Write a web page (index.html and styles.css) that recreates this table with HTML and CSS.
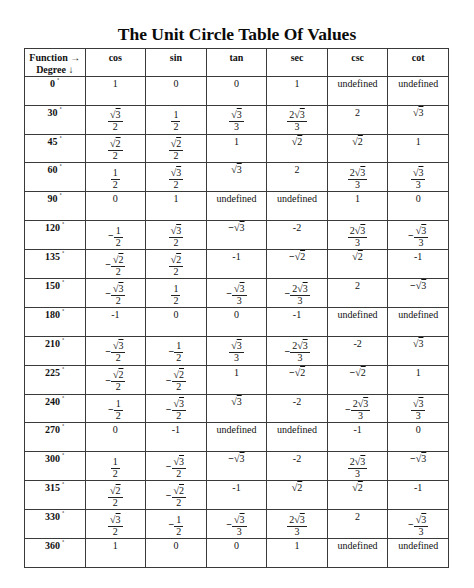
FILE: index.html
```html
<!DOCTYPE html>
<html>
<head>
<meta charset="utf-8">
<link rel="stylesheet" href="styles.css">
</head>
<body>
<h1 class="title">The Unit Circle Table Of Values</h1>
<table class="tbl">
<colgroup><col><col><col><col><col><col><col></colgroup>
<tr class="head"><th>Function →<br>Degree ↓</th><th>cos</th><th>sin</th><th>tan</th><th>sec</th><th>csc</th><th>cot</th></tr>
<tr><th>0<sup>˚</sup></th><td>1</td><td>0</td><td>0</td><td>1</td><td>undefined</td><td>undefined</td></tr>
<tr><th>30<sup>˚</sup></th>
<td><span class="fr"><span class="n"><span class="r">√<span class="o">3</span></span></span><span class="d">2</span></span></td>
<td><span class="fr"><span class="n">1</span><span class="d">2</span></span></td>
<td><span class="fr"><span class="n"><span class="r">√<span class="o">3</span></span></span><span class="d">3</span></span></td>
<td><span class="fr"><span class="n">2<span class="r">√<span class="o">3</span></span></span><span class="d">3</span></span></td>
<td>2</td>
<td><span class="r">√<span class="o">3</span></span></td></tr>
<tr><th>45<sup>˚</sup></th>
<td><span class="fr"><span class="n"><span class="r">√<span class="o">2</span></span></span><span class="d">2</span></span></td>
<td><span class="fr"><span class="n"><span class="r">√<span class="o">2</span></span></span><span class="d">2</span></span></td>
<td>1</td>
<td><span class="r">√<span class="o">2</span></span></td>
<td><span class="r">√<span class="o">2</span></span></td>
<td>1</td></tr>
<tr><th>60<sup>˚</sup></th>
<td><span class="fr"><span class="n">1</span><span class="d">2</span></span></td>
<td><span class="fr"><span class="n"><span class="r">√<span class="o">3</span></span></span><span class="d">2</span></span></td>
<td><span class="r">√<span class="o">3</span></span></td>
<td>2</td>
<td><span class="fr"><span class="n">2<span class="r">√<span class="o">3</span></span></span><span class="d">3</span></span></td>
<td><span class="fr"><span class="n"><span class="r">√<span class="o">3</span></span></span><span class="d">3</span></span></td></tr>
<tr><th>90<sup>˚</sup></th><td>0</td><td>1</td><td>undefined</td><td>undefined</td><td>1</td><td>0</td></tr>
<tr><th>120<sup>˚</sup></th>
<td><span class="neg"><span class="m">−</span><span class="fr"><span class="n">1</span><span class="d">2</span></span></span></td>
<td><span class="fr"><span class="n"><span class="r">√<span class="o">3</span></span></span><span class="d">2</span></span></td>
<td><span class="mi">−</span><span class="r">√<span class="o">3</span></span></td>
<td>-2</td>
<td><span class="fr"><span class="n">2<span class="r">√<span class="o">3</span></span></span><span class="d">3</span></span></td>
<td><span class="neg"><span class="m">−</span><span class="fr"><span class="n"><span class="r">√<span class="o">3</span></span></span><span class="d">3</span></span></span></td></tr>
<tr><th>135<sup>˚</sup></th>
<td><span class="neg"><span class="m">−</span><span class="fr"><span class="n"><span class="r">√<span class="o">2</span></span></span><span class="d">2</span></span></span></td>
<td><span class="fr"><span class="n"><span class="r">√<span class="o">2</span></span></span><span class="d">2</span></span></td>
<td>-1</td>
<td><span class="mi">−</span><span class="r">√<span class="o">2</span></span></td>
<td><span class="r">√<span class="o">2</span></span></td>
<td>-1</td></tr>
<tr><th>150<sup>˚</sup></th>
<td><span class="neg"><span class="m">−</span><span class="fr"><span class="n"><span class="r">√<span class="o">3</span></span></span><span class="d">2</span></span></span></td>
<td><span class="fr"><span class="n">1</span><span class="d">2</span></span></td>
<td><span class="neg"><span class="m">−</span><span class="fr"><span class="n"><span class="r">√<span class="o">3</span></span></span><span class="d">3</span></span></span></td>
<td><span class="neg"><span class="m">−</span><span class="fr"><span class="n">2<span class="r">√<span class="o">3</span></span></span><span class="d">3</span></span></span></td>
<td>2</td>
<td><span class="mi">−</span><span class="r">√<span class="o">3</span></span></td></tr>
<tr><th>180<sup>˚</sup></th><td>-1</td><td>0</td><td>0</td><td>-1</td><td>undefined</td><td>undefined</td></tr>
<tr><th>210<sup>˚</sup></th>
<td><span class="neg"><span class="m">−</span><span class="fr"><span class="n"><span class="r">√<span class="o">3</span></span></span><span class="d">2</span></span></span></td>
<td><span class="neg"><span class="m">−</span><span class="fr"><span class="n">1</span><span class="d">2</span></span></span></td>
<td><span class="fr"><span class="n"><span class="r">√<span class="o">3</span></span></span><span class="d">3</span></span></td>
<td><span class="neg"><span class="m">−</span><span class="fr"><span class="n">2<span class="r">√<span class="o">3</span></span></span><span class="d">3</span></span></span></td>
<td>-2</td>
<td><span class="r">√<span class="o">3</span></span></td></tr>
<tr><th>225<sup>˚</sup></th>
<td><span class="neg"><span class="m">−</span><span class="fr"><span class="n"><span class="r">√<span class="o">2</span></span></span><span class="d">2</span></span></span></td>
<td><span class="neg"><span class="m">−</span><span class="fr"><span class="n"><span class="r">√<span class="o">2</span></span></span><span class="d">2</span></span></span></td>
<td>1</td>
<td><span class="mi">−</span><span class="r">√<span class="o">2</span></span></td>
<td><span class="mi">−</span><span class="r">√<span class="o">2</span></span></td>
<td>1</td></tr>
<tr><th>240<sup>˚</sup></th>
<td><span class="neg"><span class="m">−</span><span class="fr"><span class="n">1</span><span class="d">2</span></span></span></td>
<td><span class="neg"><span class="m">−</span><span class="fr"><span class="n"><span class="r">√<span class="o">3</span></span></span><span class="d">2</span></span></span></td>
<td><span class="r">√<span class="o">3</span></span></td>
<td>-2</td>
<td><span class="neg"><span class="m">−</span><span class="fr"><span class="n">2<span class="r">√<span class="o">3</span></span></span><span class="d">3</span></span></span></td>
<td><span class="fr"><span class="n"><span class="r">√<span class="o">3</span></span></span><span class="d">3</span></span></td></tr>
<tr><th>270<sup>˚</sup></th><td>0</td><td>-1</td><td>undefined</td><td>undefined</td><td>-1</td><td>0</td></tr>
<tr><th>300<sup>˚</sup></th>
<td><span class="fr"><span class="n">1</span><span class="d">2</span></span></td>
<td><span class="neg"><span class="m">−</span><span class="fr"><span class="n"><span class="r">√<span class="o">3</span></span></span><span class="d">2</span></span></span></td>
<td><span class="mi">−</span><span class="r">√<span class="o">3</span></span></td>
<td>-2</td>
<td><span class="fr"><span class="n">2<span class="r">√<span class="o">3</span></span></span><span class="d">3</span></span></td>
<td><span class="mi">−</span><span class="r">√<span class="o">3</span></span></td></tr>
<tr><th>315<sup>˚</sup></th>
<td><span class="fr"><span class="n"><span class="r">√<span class="o">2</span></span></span><span class="d">2</span></span></td>
<td><span class="neg"><span class="m">−</span><span class="fr"><span class="n"><span class="r">√<span class="o">2</span></span></span><span class="d">2</span></span></span></td>
<td>-1</td>
<td><span class="r">√<span class="o">2</span></span></td>
<td><span class="r">√<span class="o">2</span></span></td>
<td>-1</td></tr>
<tr><th>330<sup>˚</sup></th>
<td><span class="fr"><span class="n"><span class="r">√<span class="o">3</span></span></span><span class="d">2</span></span></td>
<td><span class="neg"><span class="m">−</span><span class="fr"><span class="n">1</span><span class="d">2</span></span></span></td>
<td><span class="neg"><span class="m">−</span><span class="fr"><span class="n"><span class="r">√<span class="o">3</span></span></span><span class="d">3</span></span></span></td>
<td><span class="fr"><span class="n">2<span class="r">√<span class="o">3</span></span></span><span class="d">3</span></span></td>
<td>2</td>
<td><span class="neg"><span class="m">−</span><span class="fr"><span class="n"><span class="r">√<span class="o">3</span></span></span><span class="d">3</span></span></span></td></tr>
<tr><th>360<sup>˚</sup></th><td>1</td><td>0</td><td>0</td><td>1</td><td>undefined</td><td>undefined</td></tr>
</table>
</body>
</html>
```
FILE: styles.css
```css
html, body {
  margin: 0;
  padding: 0;
  background: #fff;
}
body {
  font-family: "Liberation Serif", "Times New Roman", serif;
  color: #111;
}
.title {
  margin: 24px 0 3.5px;
  font-size: 17.5px;
  line-height: 20px;
  font-weight: bold;
  text-align: center;
  color: #0a0a0a;
}
.tbl {
  margin-left: 24px;
  width: 425px;
  table-layout: fixed;
  border-collapse: collapse;
  font-size: 10px;
}
.tbl th, .tbl td {
  border: 1.5px solid #3a3a3a;
  padding: 1px 1px 0;
  vertical-align: top;
  text-align: center;
  line-height: 11px;
  white-space: nowrap;
}
.tbl tr {
  height: 28.9px;
}
.tbl tr.head {
  height: 28.3px;
}
.tbl th {
  font-weight: bold;
}
.tbl tr.head th {
  line-height: 12px;
  padding-top: 3px;
}
.tbl sup {
  font-size: 7px;
  line-height: 0;
  vertical-align: 4px;
  margin-left: 2px;
}
.fr {
  display: inline-block;
  vertical-align: top;
}
.fr .n {
  display: block;
  padding: 2.5px 2px 0;
  line-height: 12px;
  border-bottom: 1px solid #222;
}
.fr .d {
  display: block;
  line-height: 10.5px;
  padding: 0 2px;
}
.o {
  text-decoration: overline;
  text-decoration-thickness: 0.8px;
}
.neg {
  display: inline-block;
  vertical-align: top;
}
.neg .m {
  display: inline-block;
  vertical-align: top;
  padding-top: 8px;
  line-height: 11px;
  font-weight: bold;
}
.mi {
  font-weight: bold;
}
```
